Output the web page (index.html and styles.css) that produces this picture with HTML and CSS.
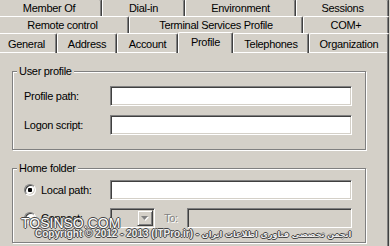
FILE: index.html
```html
<!DOCTYPE html>
<html lang="en">
<head>
  <meta charset="UTF-8" />
  <meta name="viewport" content="width=device-width, initial-scale=1.0"/>
  <title>User Properties - Profile</title>
  <link rel="stylesheet" href="styles.css">
</head>
<body>

  <div class="sheet">
    <!-- Tab rows, back row first -->
    <div class="tab-row row-1">
      <div class="tab">Member Of</div>
      <div class="tab">Dial-in</div>
      <div class="tab">Environment</div>
      <div class="tab">Sessions</div>
    </div>
    <div class="tab-row row-2">
      <div class="tab">Remote control</div>
      <div class="tab">Terminal Services Profile</div>
      <div class="tab">COM+</div>
    </div>
    <div class="tab-row row-3">
      <div class="tab">General</div>
      <div class="tab">Address</div>
      <div class="tab">Account</div>
      <div class="tab active">Profile</div>
      <div class="tab">Telephones</div>
      <div class="tab">Organization</div>
    </div>

    <!-- Profile page -->
    <div class="panel">
      <fieldset class="group">
        <legend>User profile</legend>
        <div class="field-grid">
          <label>Profile path:</label>
          <div class="textbox"></div>
          <label>Logon script:</label>
          <div class="textbox"></div>
        </div>
      </fieldset>

      <fieldset class="group home">
        <legend>Home folder</legend>
        <div class="field-grid">
          <label class="radio"><span class="dot checked"></span>Local path:</label>
          <div class="textbox"></div>
          <label class="radio"><span class="dot"></span>Connect:</label>
          <div class="connect-row">
            <div class="combo">
              <span class="combo-btn">
                <svg width="8" height="5" viewBox="0 0 8 5"><path d="M1 1h7l-3.5 4z" fill="#fff"/><path d="M0 0h7l-3.5 4z" fill="#808080"/></svg>
              </span>
            </div>
            <span class="disabled-text">To:</span>
            <div class="textbox disabled"></div>
          </div>
        </div>
      </fieldset>
    </div>
  </div>

  <!-- Site watermark over the screenshot -->
  <div class="watermark">
    <div class="wm-site">TOSINSO.COM</div>
    <div class="wm-copy">Copyright © 2012 - 2013 (ITPro.ir) - <span class="wm-fa">انجمن تخصصی فناوری اطلاعات ایران</span></div>
  </div>

</body>
</html>
```

FILE: styles.css
```css
* {
  box-sizing: border-box;
}

body {
  margin: 0;
  width: 390px;
  height: 246px;
  overflow: hidden;
  position: relative;
  background-color: #d4d0c8;
  font-family: "Liberation Sans", Arial, sans-serif;
  font-size: 11px;
  letter-spacing: -0.3px;
  color: #000;
}

.sheet {
  margin-left: -4px;
  width: 393px;
}

/* Tabs */

.tab-row {
  display: grid;
  height: 17px;
}

.row-1 {
  margin-top: -1px;
  grid-template-columns: 106px 83px 111px 93px;
}

.row-2 {
  grid-template-columns: 133px 174px 86px;
}

.row-3 {
  height: 19px;
  grid-template-columns: 61px 60px 61px 55px 76px 80px;
}

.tab {
  display: flex;
  align-items: center;
  justify-content: center;
  white-space: nowrap;
  border-top: 1px solid #fff;
  border-left: 1px solid #fff;
  border-right: 1px solid #404040;
  border-radius: 2px 2px 0 0;
  box-shadow: inset -1px 0 #808080;
}

.tab.active {
  position: relative;
  z-index: 1;
  margin-top: -1px;
  height: 21px;
  padding-bottom: 3px;
  background-color: #d4d0c8;
}

/* Page */

.panel {
  border-top: 1px solid #fff;
  border-left: 1px solid #fff;
  border-right: 1px solid #404040;
  box-shadow: inset -1px 0 #808080;
  padding: 11px 22px 12px 15px;
}

.group {
  margin: 0;
  min-width: 0;
  padding: 7px 13px 14px 11px;
  border: 1px solid #808080;
  box-shadow: inset 1px 1px #fff, 1px 1px #fff;
}

.group legend {
  margin-left: -7px;
  padding: 0 2px;
  line-height: 15px;
  background-color: #d4d0c8;
}

.home {
  margin-top: 11px;
  padding-top: 4px;
}

.field-grid {
  display: grid;
  grid-template-columns: 86px 1fr;
  align-items: center;
  row-gap: 9px;
}

.home .field-grid {
  row-gap: 8px;
}

.textbox {
  height: 20px;
  background-color: #fff;
  border: 1px solid;
  border-color: #808080 #fff #fff #808080;
  box-shadow: inset 1px 1px #404040, inset -1px -1px #d4d0c8;
}

.textbox.disabled {
  background-color: #d4d0c8;
}

.radio {
  display: flex;
  align-items: center;
  gap: 5px;
}

.dot {
  width: 12px;
  height: 12px;
  border-radius: 50%;
  background: #fff;
  border: 1px solid;
  border-color: #808080 #fff #fff #808080;
  box-shadow: inset 1px 1px #404040, inset -1px -1px #d4d0c8;
}

.dot.checked {
  background: radial-gradient(circle, #000 2px, #fff 2.5px);
}

.connect-row {
  display: flex;
  align-items: center;
}

.combo {
  width: 45px;
  height: 20px;
  padding: 1px;
  display: flex;
  justify-content: flex-end;
  background-color: #d4d0c8;
  border: 1px solid;
  border-color: #808080 #fff #fff #808080;
  box-shadow: inset 1px 1px #404040, inset -1px -1px #d4d0c8;
}

.combo-btn {
  width: 16px;
  display: flex;
  align-items: center;
  justify-content: center;
  border: 1px solid;
  border-color: #d4d0c8 #404040 #404040 #d4d0c8;
  box-shadow: inset 1px 1px #fff, inset -1px -1px #808080;
}

.disabled-text {
  margin: 0 9px;
  color: #808080;
  text-shadow: 1px 1px #fff;
}

.connect-row .textbox {
  flex: 1;
}

/* Watermark */

.watermark {
  position: absolute;
  left: 21px;
  top: 216px;
  letter-spacing: 0;
  color: #fff;
  font-family: "Liberation Sans", "DejaVu Sans", sans-serif;
  text-shadow: -1px 0 #444, 1px 0 #444, 0 -1px #444, 0 1px #444;
}

.wm-site {
  font-size: 14px;
  line-height: 14px;
}

.wm-copy {
  margin: -2px 0 0 14px;
  font-size: 10px;
  line-height: 12px;
  font-weight: bold;
  color: #eee;
  white-space: nowrap;
}

.wm-fa {
  font-family: "DejaVu Sans", sans-serif;
  font-size: 8px;
}
```
